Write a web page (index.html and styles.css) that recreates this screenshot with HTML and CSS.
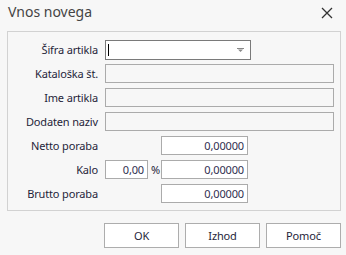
FILE: index.html
```html
<!DOCTYPE html>
<html>
<head>
<meta charset="utf-8">
<link rel="stylesheet" href="styles.css">
</head>
<body>
<div class="dialog">
  <div class="titlebar">
    <span class="title">Vnos novega</span>
    <span class="close">
      <svg width="12" height="12" viewBox="0 0 12 12"><path d="M1 1L11 11M11 1L1 11" stroke="#333" stroke-width="1.3" fill="none"/></svg>
    </span>
  </div>
  <div class="panel">
    <div class="form">
      <label class="lbl">Šifra artikla</label>
      <div class="row"><div class="combo"><span class="caret"></span><span class="arrow"><svg width="7" height="4" viewBox="0 0 7 4"><rect x="0" y="0" width="7" height="1" fill="#888"/><path d="M1 1.5H6L3.5 4Z" fill="#888"/></svg></span></div></div>

      <label class="lbl">Kataloška št.</label>
      <div class="row"><div class="field wide disabled"></div></div>

      <label class="lbl">Ime artikla</label>
      <div class="row"><div class="field wide disabled"></div></div>

      <label class="lbl">Dodaten naziv</label>
      <div class="row"><div class="field wide disabled"></div></div>

      <label class="lbl">Netto poraba</label>
      <div class="row indent"><div class="field num">0,00000</div></div>

      <label class="lbl">Kalo</label>
      <div class="row"><div class="field small num">0,00</div><span class="pct">%</span><div class="field num">0,00000</div></div>

      <label class="lbl">Brutto poraba</label>
      <div class="row indent"><div class="field num">0,00000</div></div>
    </div>
  </div>
  <div class="buttons">
    <button class="btn">OK</button>
    <button class="btn">Izhod</button>
    <button class="btn">Pomoč</button>
  </div>
</div>
</body>
</html>
```
FILE: styles.css
```css
html, body {
  margin: 0;
  padding: 0;
  background: #f7f7f7;
}
body {
  font-family: "Noto Sans", "Open Sans", sans-serif;
  font-size: 11px;
  letter-spacing: -0.15px;
  color: #1f1f3a;
}
.dialog {
  width: 346px;
  height: 255px;
  display: flex;
  flex-direction: column;
}
.titlebar {
  height: 31px;
  display: flex;
  align-items: flex-start;
  justify-content: space-between;
  padding: 0 0 0 8px;
}
.title {
  font-size: 14px;
  letter-spacing: 0;
  color: #444;
  margin-top: 2px;
  line-height: 20px;
}
.close {
  margin: 7px 13px 0 0;
  width: 12px;
  height: 12px;
  display: flex;
}
.panel {
  margin-left: 7px;
  width: 332px;
  height: 178px;
  border: 1px solid #d2d2d2;
}
.form {
  display: grid;
  grid-template-columns: 90px 1fr;
  column-gap: 7px;
  grid-auto-rows: 19px;
  row-gap: 5px;
  padding-top: 8px;
}
.lbl {
  text-align: right;
  line-height: 19px;
  white-space: nowrap;
}
.row {
  display: flex;
  align-items: center;
  height: 19px;
}
.combo {
  position: relative;
  width: 144px;
  height: 18px;
  border: 1px solid #7a7a7a;
  background: #fff;
  margin-top: 1px;
}
.caret {
  position: absolute;
  left: 2px;
  top: 3px;
  width: 1px;
  height: 12px;
  background: #000;
}
.arrow {
  position: absolute;
  right: 6px;
  top: 7px;
  display: flex;
}
.field {
  box-sizing: border-box;
  height: 19px;
  border: 1px solid #ababab;
  background: #fff;
  width: 87px;
  line-height: 17px;
  padding: 0 3px;
}
.field.wide {
  width: 229px;
}
.field.disabled {
  background: #f7f7f7;
}
.field.small {
  width: 43px;
}
.num {
  text-align: right;
  color: #303050;
}
.indent {
  padding-left: 56px;
}
.pct {
  width: 13px;
  padding-left: 3px;
  box-sizing: border-box;
  line-height: 19px;
}
.buttons {
  display: flex;
  justify-content: flex-end;
  gap: 6px;
  padding: 12px 5px 0 0;
}
.btn {
  width: 75px;
  height: 25px;
  border: 1px solid #adadad;
  background: #fff;
  font-family: "Noto Sans", "Open Sans", sans-serif;
  font-size: 11px;
  letter-spacing: -0.15px;
  color: #1f1f3a;
  padding: 0;
  margin: 0;
}
```
